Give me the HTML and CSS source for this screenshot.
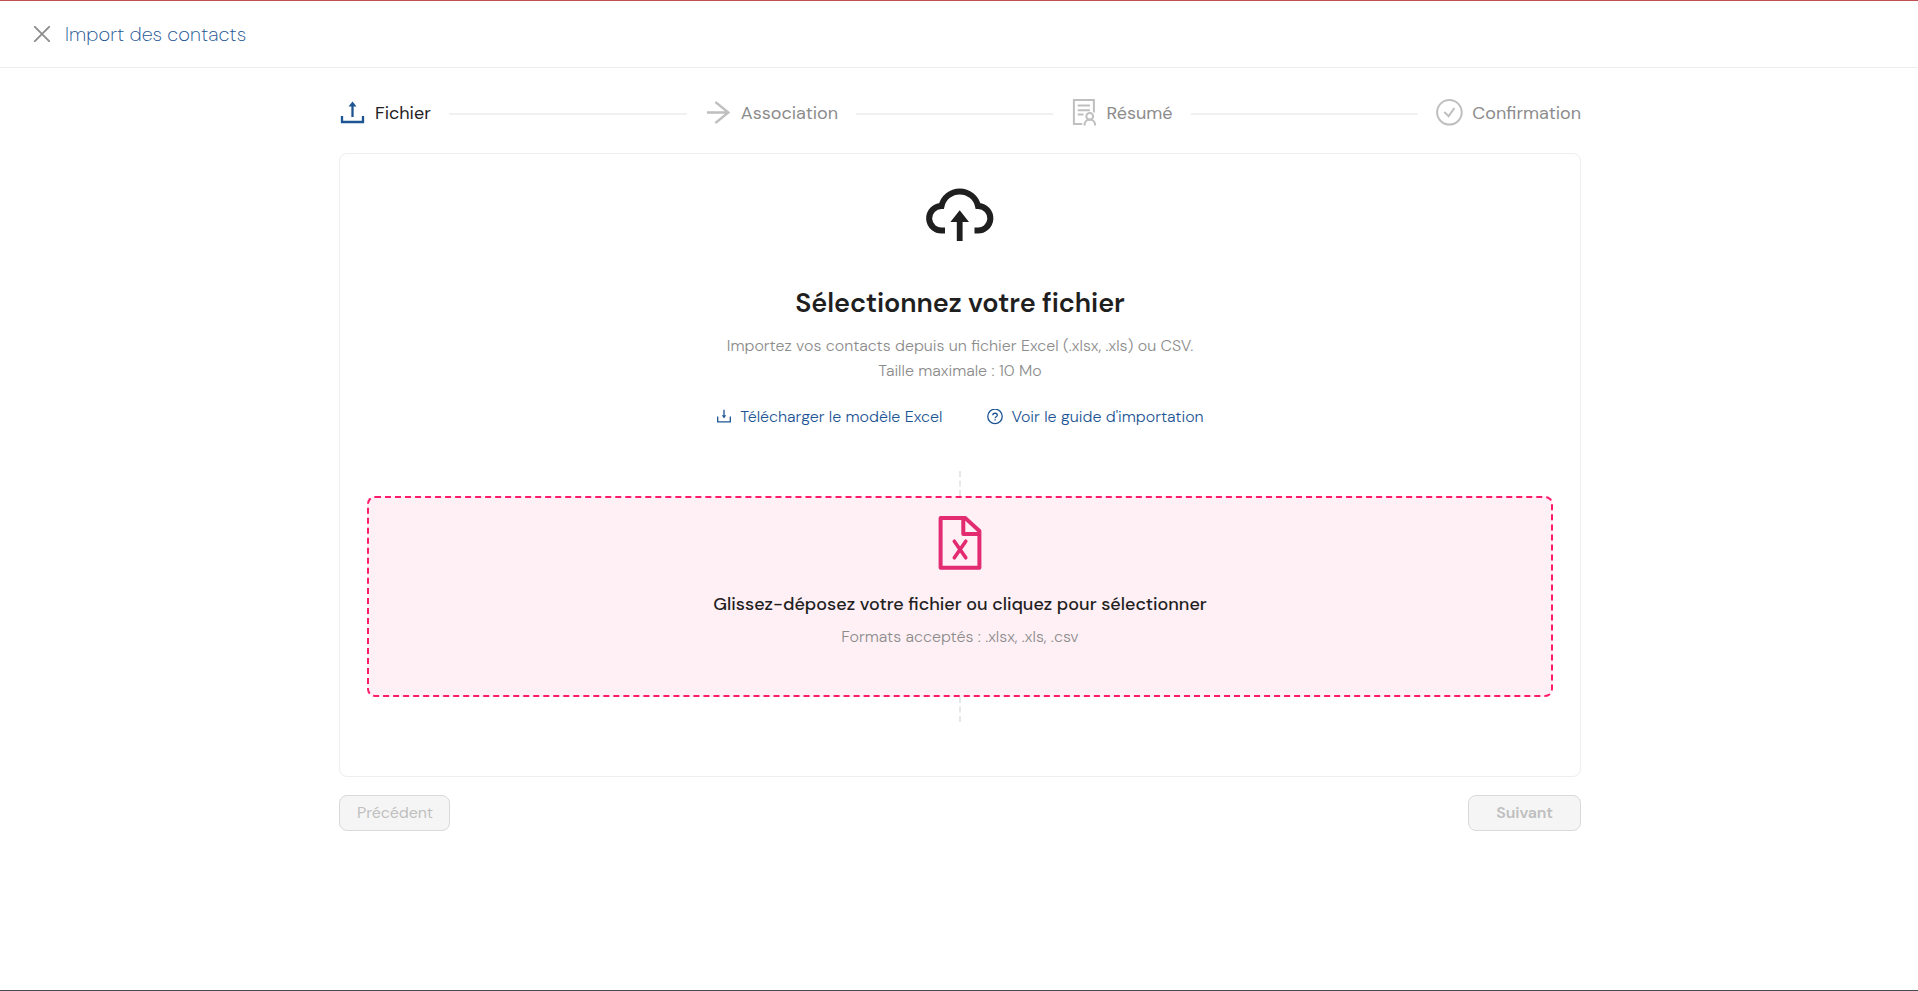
FILE: index.html
```html
<!DOCTYPE html>
<html lang="fr">
<head>
    <meta charset="UTF-8">
    <meta name="viewport" content="width=device-width, initial-scale=1.0">
    <title>Import des contacts</title>
    <link rel="stylesheet" href="styles.css">
</head>
<body>
    <!-- En-tête -->
    <header class="header">
        <svg class="close-icon" viewBox="0 0 16 16"><path d="M0 0l16 16M16 0L0 16"/></svg>
        <h1 class="header-title">Import des contacts</h1>
    </header>

    <main class="container">
        <!-- Étapes -->
        <div class="steps">
            <div class="step active">
                <svg class="step-icon" viewBox="0 0 28 28">
                    <path d="M3 18v6h21v-6M13.5 7v12"/>
                    <path class="fill" d="M13.5 3.5l4 5h-8z"/>
                </svg>
                <span class="step-label">Fichier</span>
                <span class="step-line"></span>
            </div>
            <div class="step">
                <svg class="step-icon" viewBox="0 0 28 28"><path d="M2 14.5h22M10.4 4l13 10.5-13 10.5"/></svg>
                <span class="step-label">Association</span>
                <span class="step-line"></span>
            </div>
            <div class="step">
                <svg class="step-icon thin" viewBox="0 0 28 28">
                    <path d="M11.2 26H2.9V2h20v12.5M6.7 7.5h12.2M6.7 12.3h12.2M6.7 16.5h5.8"/>
                    <circle cx="18.7" cy="18.3" r="3.4"/>
                    <path d="M13.5 27.5c0-8 10.6-8 10.6 0"/>
                </svg>
                <span class="step-label">Résumé</span>
                <span class="step-line"></span>
            </div>
            <div class="step">
                <svg class="step-icon thin" viewBox="0 0 28 28">
                    <circle cx="13.4" cy="14.3" r="12.3"/>
                    <path d="M8.3 14l4.3 4.2 5.8-8.2"/>
                </svg>
                <span class="step-label">Confirmation</span>
            </div>
        </div>

        <!-- Sélection du fichier -->
        <section class="card">
            <svg class="cloud-icon" viewBox="0 0 72 72">
                <path d="M21 50.5h-2A12.3 12.3 0 1 1 17.5 26A18.7 18.7 0 0 1 54 26A12.3 12.3 0 1 1 52.5 50.5h-2"/>
                <path class="fill" d="M35.7 30.3L45 42h-6.4v19h-5.8V42h-6.4z"/>
            </svg>
            <h2 class="card-title">Sélectionnez votre fichier</h2>
            <p class="card-text">Importez vos contacts depuis un fichier Excel (.xlsx, .xls) ou CSV.<br>Taille maximale : 10 Mo</p>
            <div class="links">
                <a class="link">
                    <svg class="link-icon" viewBox="0 0 16 16">
                        <path d="M1.7 7.5v5.3h12.6V7.5M8 .8v6"/>
                        <path class="fill" d="M8 9.5L5.8 6.3h4.4z"/>
                    </svg>
                    Télécharger le modèle Excel
                </a>
                <a class="link">
                    <svg class="link-icon" viewBox="0 0 16 16">
                        <circle cx="8" cy="7.4" r="7.2"/>
                        <path d="M5.8 6.2c0-2.6 4.5-2.6 4.5 0 0 1.5-2.2 1.5-2.2 3M8.1 10.2v1.3"/>
                    </svg>
                    Voir le guide d'importation
                </a>
            </div>

            <div class="connector"></div>
            <div class="dropzone">
                <svg class="file-icon" viewBox="0 0 44 54">
                    <path d="M2.6 2.1h24.8L41.4 15v36.8H2.6zM25.3 2.1V18h16"/>
                    <path class="cross" d="M16.3 25.2L27.8 41.8M27.8 25.2L16.3 41.8"/>
                </svg>
                <p class="drop-title">Glissez-déposez votre fichier ou cliquez pour sélectionner</p>
                <p class="drop-text">Formats acceptés : .xlsx, .xls, .csv</p>
            </div>
            <div class="connector"></div>
        </section>

        <!-- Navigation -->
        <div class="actions">
            <button class="btn" disabled>Précédent</button>
            <button class="btn btn-next" disabled>Suivant</button>
        </div>
    </main>
</body>
</html>
```
FILE: styles.css
```css
* {
    box-sizing: border-box;
}
body {
    font-family: "DM Sans", Inter, sans-serif;
    margin: 0;
    height: 100vh;
    background-color: #fff;
    border-top: 1px solid #c0504d;
    border-bottom: 1px solid #454a54;
    overflow: hidden;
}
h1, h2, p {
    margin: 0;
}
svg {
    flex: none;
    fill: none;
    stroke: currentColor;
}
.fill {
    fill: currentColor;
    stroke: none;
}
.header {
    display: flex;
    align-items: center;
    gap: 15px;
    height: 67px;
    padding-left: 34px;
    border-bottom: 1px solid #eee;
}
.close-icon {
    width: 16px;
    height: 16px;
    color: #8c8c8c;
    stroke-width: 1.8;
}
.header-title {
    font-size: 20px;
    font-weight: 200;
    letter-spacing: 0.1px;
    color: #1d5594;
}
.container {
    width: 1242px;
    margin-left: 339px;
    padding-top: 30px;
}
.steps {
    display: flex;
    height: 28px;
    color: #bfbfbf;
}
.step {
    display: flex;
    align-items: center;
    flex: 1;
}
.step:last-child {
    flex: none;
}
.step-icon {
    width: 28px;
    height: 28px;
    margin-right: 8px;
    stroke-width: 2.3;
}
.step-icon.thin {
    stroke-width: 2;
}
.step-label {
    padding-top: 2px;
    font-size: 18px;
    color: #8c8c8c;
}
.step.active {
    color: #1d5594;
}
.step.active .step-label {
    color: #1f1f1f;
}
.step-line {
    flex: 1;
    height: 2px;
    margin: 4px 18px 0;
    background-color: #f0f0f0;
}
.card {
    display: flex;
    flex-direction: column;
    align-items: center;
    height: 624px;
    margin-top: 27px;
    padding: 26px 27px 0;
    border: 1px solid #eee;
    border-radius: 8px;
    text-align: center;
}
.cloud-icon {
    width: 72px;
    height: 72px;
    color: #1f1f1f;
    stroke-width: 6;
}
.card-title {
    margin-top: 33px;
    font-size: 27px;
    font-weight: 600;
    line-height: 36px;
    letter-spacing: -0.08px;
    color: #1f1f1f;
}
.card-text {
    margin-top: 12px;
    font-size: 16px;
    font-weight: 300;
    line-height: 25px;
    color: #8c8c8c;
}
.links {
    display: flex;
    gap: 45px;
    margin: 22px 0 42px;
}
.link {
    display: flex;
    align-items: center;
    gap: 8px;
    font-size: 16px;
    font-weight: 360;
    line-height: 24px;
    color: #1d5594;
}
.link-icon {
    width: 16px;
    height: 16px;
    stroke-width: 1.3;
}
.connector {
    height: 25px;
    border-left: 2px dashed #e5e7eb;
}
.dropzone {
    display: flex;
    flex-direction: column;
    align-items: center;
    width: 100%;
    height: 201px;
    padding-top: 18px;
    background-color: #fff0f5;
    border: 2px dashed #ff1a6c;
    border-radius: 8px;
}
.file-icon {
    width: 44px;
    height: 54px;
    color: #e22b70;
    stroke-width: 4;
    stroke-linejoin: round;
}
.cross {
    stroke-width: 3.6;
    stroke-linecap: round;
}
.drop-title {
    margin-top: 22px;
    font-size: 18px;
    font-weight: 480;
    line-height: 24px;
    color: #1f1f1f;
}
.drop-text {
    margin-top: 9px;
    font-size: 16px;
    font-weight: 300;
    line-height: 24px;
    color: #8c8c8c;
}
.actions {
    display: flex;
    justify-content: space-between;
    margin-top: 18px;
}
.btn {
    height: 36px;
    padding: 0 16px 2px 17px;
    font-family: inherit;
    font-size: 16px;
    letter-spacing: -0.1px;
    color: #bfbfbf;
    background-color: #f5f5f5;
    border: 1px solid #d9d9d9;
    border-radius: 8px;
}
.btn-next {
    padding: 0 27px 2px;
    font-weight: 600;
}
```
